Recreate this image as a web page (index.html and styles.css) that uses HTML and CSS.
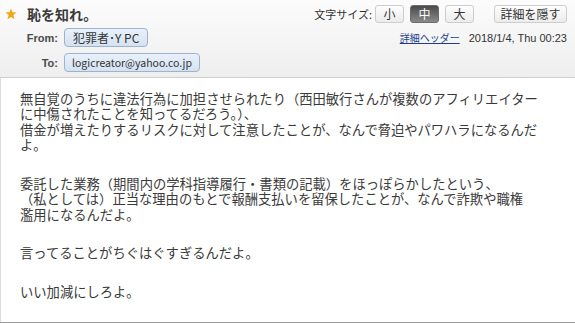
FILE: index.html
```html
<!DOCTYPE html>
<html lang="ja">
<head>
<meta charset="utf-8">
<link rel="stylesheet" href="styles.css">
</head>
<body>
<div class="mail">
  <header class="head">
    <div class="row-top">
      <div class="subject">
        <svg class="star" width="12" height="12" viewBox="0 0 12 12"><path d="M6 0.5 L7.5 4.3 L11.6 4.5 L8.4 7.1 L9.5 11.2 L6 8.9 L2.5 11.2 L3.6 7.1 L0.4 4.5 L4.5 4.3 Z" fill="#f2a516"/></svg>
        <span class="title">恥を知れ。</span>
      </div>
      <div class="tools">
        <span class="fs-label">文字サイズ:</span>
        <span class="btn">小</span>
        <span class="btn active">中</span>
        <span class="btn">大</span>
        <span class="btn wide">詳細を隠す</span>
      </div>
    </div>
    <div class="row-from">
      <span class="lbl">From:</span>
      <span class="badge kanji">犯罪者･Y PC</span>
      <span class="spacer"></span>
      <a class="detail">詳細ヘッダー</a>
      <span class="date">2018/1/4, Thu 00:23</span>
    </div>
    <div class="row-to">
      <span class="lbl">To:</span>
      <span class="badge">logicreator@yahoo.co.jp</span>
    </div>
  </header>
  <div class="body">
    <p>無自覚のうちに違法行為に加担させられたり（西田敏行さんが複数のアフィリエイター<br>に中傷されたことを知ってるだろう。）、<br>借金が増えたりするリスクに対して注意したことが、なんで脅迫やパワハラになるんだ<br>よ。</p>
    <p>委託した業務（期間内の学科指導履行・書類の記載）をほっぽらかしたという、<br>（私としては）正当な理由のもとで報酬支払いを留保したことが、なんで詐欺や職権<br>濫用になるんだよ。</p>
    <p>言ってることがちぐはぐすぎるんだよ。</p>
    <p>いい加減にしろよ。</p>
  </div>
</div>
</body>
</html>
```
FILE: styles.css
```css
* { box-sizing: border-box; }
html, body { margin: 0; padding: 0; background: #fff; }
body {
  font-family: "Liberation Sans", "Noto Sans CJK JP", sans-serif;
  color: #333;
  width: 575px;
  height: 323px;
  overflow: hidden;
}
.mail {
  height: 323px;
  display: flex;
  flex-direction: column;
  border-bottom: 1px solid #9a9a9a;
}
.head {
  height: 83px;
  background: linear-gradient(#fcfcfc, #eeeeee);
  border-bottom: 1px solid #cfcfcf;
  padding: 4px 8px 0 5px;
}
.row-top {
  display: flex;
  align-items: center;
  height: 19px;
}
.subject {
  display: flex;
  align-items: center;
  gap: 10px;
  flex: 1;
}
.star { display: block; }
.title {
  font-family: "Noto Sans CJK JP", sans-serif;
  font-weight: bold;
  font-size: 14px;
  color: #3a3a3a;
}
.tools {
  display: flex;
  align-items: center;
  gap: 6px;
  font-family: "Noto Sans CJK JP", sans-serif;
  font-size: 11px;
}
.fs-label { margin-right: -3px; color: #333; }
.btn {
  display: inline-flex;
  align-items: center;
  justify-content: center;
  width: 29px;
  height: 18px;
  border: 1px solid #cdcdcd;
  border-radius: 3px;
  background: linear-gradient(#fdfdfd, #ececec);
  font-size: 12px;
  color: #333;
}
.btn.active {
  background: linear-gradient(#4a4a4a, #8a8a8a);
  border-color: #6a6a6a;
  color: #fff;
}
.btn.wide {
  width: 73px;
  margin-left: 14px;
}
.row-from, .row-to {
  display: flex;
  align-items: center;
  font-size: 11px;
}
.row-from { margin-top: 5px; height: 19px; }
.row-to { margin-top: 6px; height: 19px; }
.lbl {
  width: 53px;
  text-align: right;
  font-weight: bold;
  color: #4a4a4a;
  margin-right: 6px;
}
.badge {
  display: inline-flex;
  align-items: center;
  height: 19px;
  padding: 0 7px;
  border: 1px solid #9db3cc;
  border-radius: 4px;
  background: linear-gradient(#e9f1fa, #d4e2f1);
  font-family: "Noto Sans CJK JP", sans-serif;
  font-size: 10.5px;
  color: #333;
}
.badge.kanji {
  font-size: 12px;
  padding: 0 8px;
}
.spacer { flex: 1; }
.detail {
  font-family: "Noto Sans CJK JP", sans-serif;
  font-size: 10px;
  color: #1f3f8c;
  text-decoration: underline;
  margin-right: 9px;
}
.date {
  font-size: 11px;
  color: #333;
  margin-right: 0;
}
.body {
  flex: 1;
  border-left: 1px solid #dcdcdc;
  padding: 13px 0 0 19px;
  font-family: "Noto Sans CJK JP", sans-serif;
  font-size: 13.3px;
  line-height: 15.5px;
  color: #3a3a3a;
}
.body p {
  margin: 0 0 23px;
  white-space: nowrap;
}
```
